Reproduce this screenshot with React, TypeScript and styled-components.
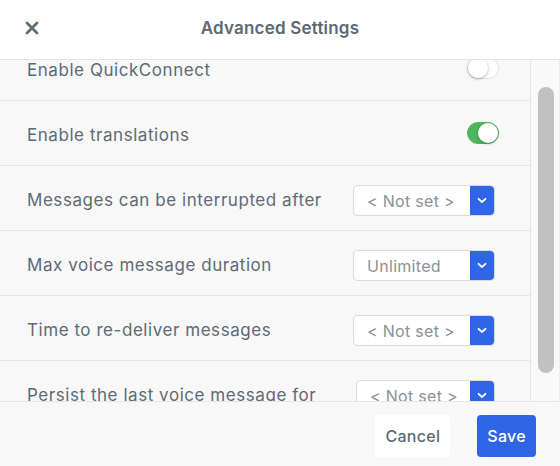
import styled, { createGlobalStyle } from "styled-components";

const GlobalStyle = createGlobalStyle`
  html, body {
    margin: 0;
    padding: 0;
    background: #ffffff;
  }
  body {
    font-family: Inter, "Noto Sans", "Liberation Sans", sans-serif;
    color: #5e6a74;
  }
`;

const Panel = styled.div`
  width: 560px;
  height: 466px;
  display: flex;
  flex-direction: column;
  background: #f8f8f8;
  overflow: hidden;
`;

const Header = styled.div`
  height: 60px;
  flex-shrink: 0;
  box-sizing: border-box;
  border-bottom: 1px solid #e4e4e4;
  background: #ffffff;
  display: grid;
  grid-template-columns: 60px 1fr 60px;
  align-items: center;
  position: relative;
  z-index: 1;
`;

const CloseButton = styled.button`
  border: none;
  background: none;
  padding: 0;
  margin: 0 0 4px 24px;
  width: 16px;
  height: 16px;
  display: flex;
  align-items: center;
  justify-content: center;
  cursor: pointer;
`;

const Title = styled.h1`
  margin: 0;
  text-align: center;
  font-size: 17px;
  font-weight: 600;
  letter-spacing: 0.2px;
  color: #5c6871;
  padding-bottom: 4px;
`;

const Body = styled.div`
  flex: 1;
  display: flex;
  min-height: 0;
`;

const ListPane = styled.div`
  flex: 1;
  overflow: hidden;
`;

const List = styled.div<{ $offset: number }>`
  margin-top: ${(p) => -p.$offset}px;
`;

const Row = styled.div`
  height: 65px;
  box-sizing: border-box;
  border-bottom: 1px solid #e6e6e6;
  display: flex;
  align-items: center;
  justify-content: space-between;
  padding: 0 31px 0 27px;
`;

const Label = styled.span`
  margin-top: 3px;
  font-size: 17px;
  letter-spacing: 0.55px;
  color: #5e6a74;
  white-space: nowrap;
`;

const Toggle = styled.div<{ $on: boolean }>`
  width: 32px;
  height: 22px;
  box-sizing: border-box;
  border-radius: 11px;
  background: ${(p) => (p.$on ? "#4cb65b" : "#ffffff")};
  border: 1px solid ${(p) => (p.$on ? "#4cb65b" : "#e0e0e0")};
  display: flex;
  align-items: center;
  justify-content: ${(p) => (p.$on ? "flex-end" : "flex-start")};
  padding: 0;
`;

const Knob = styled.div`
  width: 20px;
  height: 20px;
  border-radius: 50%;
  background: #ffffff;
  box-shadow: 0 1px 3px rgba(0, 0, 0, 0.3);
`;

const Select = styled.div<{ $width: number }>`
  width: ${(p) => p.$width}px;
  height: 29px;
  margin: 5px 5px 0 0;
  display: flex;
  border-radius: 4px;
  box-shadow: 0 0 0 1px #dadada, 0 1px 1px rgba(0, 0, 0, 0.06);
  overflow: hidden;
  background: #ffffff;
`;

const SelectValue = styled.span`
  flex: 1;
  display: flex;
  align-items: center;
  padding-left: 13px;
  font-size: 16px;
  letter-spacing: 0.3px;
  color: #87929a;
  white-space: nowrap;
`;

const SelectArrow = styled.span`
  width: 24px;
  background: #2f66e6;
  display: flex;
  align-items: center;
  justify-content: center;
`;

const ScrollTrack = styled.div`
  width: 30px;
  box-sizing: border-box;
  border-left: 1px solid #e6e6e6;
  border-right: 1px solid #eeeeee;
  background: #f9f9f9;
  padding: 27px 0 0 7px;
`;

const ScrollThumb = styled.div`
  width: 16px;
  height: 286px;
  border-radius: 8px;
  background: #c1c1c1;
`;

const Footer = styled.div`
  height: 65px;
  flex-shrink: 0;
  box-sizing: border-box;
  border-top: 1px solid #e6e6e6;
  background: #f8f8f8;
  display: flex;
  align-items: center;
  justify-content: flex-end;
  gap: 27px;
  padding: 4px 24px 0 0;
`;

const Button = styled.button<{ $primary?: boolean }>`
  height: 42px;
  padding: 0 10px;
  border: none;
  border-radius: 4px;
  font-family: inherit;
  font-size: 16px;
  font-weight: 500;
  letter-spacing: 0.3px;
  background: ${(p) => (p.$primary ? "#2f66e6" : "#ffffff")};
  color: ${(p) => (p.$primary ? "#ffffff" : "#5e6a74")};
  cursor: pointer;
`;

function CloseIcon() {
  return (
    <svg width="14" height="14" viewBox="0 0 14 14">
      <path
        d="M2 2 L12 12 M12 2 L2 12"
        stroke="#5e6a74"
        strokeWidth="2.8"
        strokeLinecap="round"
      />
    </svg>
  );
}

function Chevron() {
  return (
    <svg width="10" height="7" viewBox="0 0 10 7">
      <path
        d="M1.5 1.8 L5 5 L8.5 1.8"
        fill="none"
        stroke="#ffffff"
        strokeWidth="1.8"
        strokeLinecap="round"
        strokeLinejoin="round"
      />
    </svg>
  );
}

type Setting =
  | { label: string; kind: "toggle"; on: boolean }
  | { label: string; kind: "select"; value: string; width: number };

const settings: Setting[] = [
  { label: "Enable QuickConnect", kind: "toggle", on: false },
  { label: "Enable translations", kind: "toggle", on: true },
  { label: "Messages can be interrupted after", kind: "select", value: "< Not set >", width: 140 },
  { label: "Max voice message duration", kind: "select", value: "Unlimited", width: 140 },
  { label: "Time to re-deliver messages", kind: "select", value: "< Not set >", width: 140 },
  { label: "Persist the last voice message for", kind: "select", value: "< Not set >", width: 137 },
];

export default function App() {
  return (
    <>
      <GlobalStyle />
      <Panel>
        <Header>
          <CloseButton aria-label="Close">
            <CloseIcon />
          </CloseButton>
          <Title>Advanced Settings</Title>
          <span />
        </Header>
        <Body>
          <ListPane>
            <List $offset={24}>
              {settings.map((s) => (
                <Row key={s.label}>
                  <Label>{s.label}</Label>
                  {s.kind === "toggle" ? (
                    <Toggle $on={s.on}>
                      <Knob />
                    </Toggle>
                  ) : (
                    <Select $width={s.width}>
                      <SelectValue>{s.value}</SelectValue>
                      <SelectArrow>
                        <Chevron />
                      </SelectArrow>
                    </Select>
                  )}
                </Row>
              ))}
            </List>
          </ListPane>
          <ScrollTrack>
            <ScrollThumb />
          </ScrollTrack>
        </Body>
        <Footer>
          <Button>Cancel</Button>
          <Button $primary>Save</Button>
        </Footer>
      </Panel>
    </>
  );
}
